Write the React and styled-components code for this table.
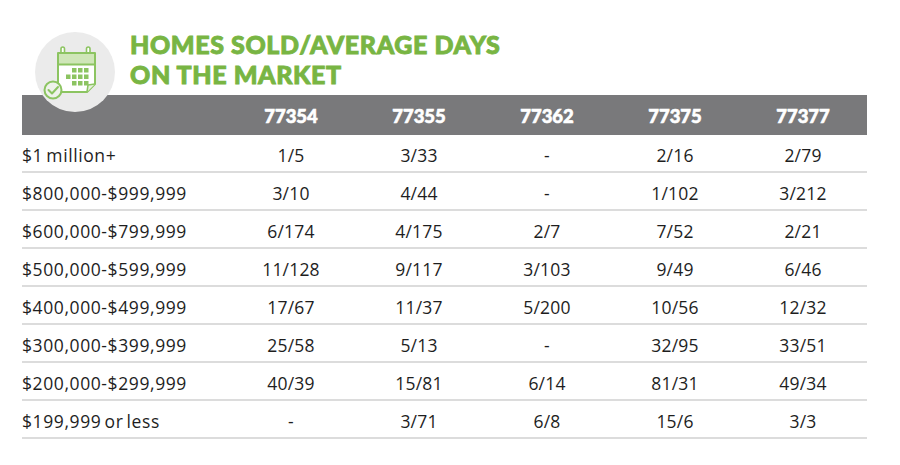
import styled, { createGlobalStyle } from "styled-components";

const GlobalStyle = createGlobalStyle`
  html, body {
    margin: 0;
    padding: 0;
    background: #fff;
  }
  body {
    width: 900px;
    height: 465px;
    overflow: hidden;
  }
`;

const zips = ["77354", "77355", "77362", "77375", "77377"];

const rows = [
  { label: "$1 million+", values: ["1/5", "3/33", "-", "2/16", "2/79"] },
  { label: "$800,000-$999,999", values: ["3/10", "4/44", "-", "1/102", "3/212"] },
  { label: "$600,000-$799,999", values: ["6/174", "4/175", "2/7", "7/52", "2/21"] },
  { label: "$500,000-$599,999", values: ["11/128", "9/117", "3/103", "9/49", "6/46"] },
  { label: "$400,000-$499,999", values: ["17/67", "11/37", "5/200", "10/56", "12/32"] },
  { label: "$300,000-$399,999", values: ["25/58", "5/13", "-", "32/95", "33/51"] },
  { label: "$200,000-$299,999", values: ["40/39", "15/81", "6/14", "81/31", "49/34"] },
  { label: "$199,999 or less", values: ["-", "3/71", "6/8", "15/6", "3/3"] },
];

const CalendarIcon = () => (
  <svg width="80" height="80" viewBox="0 0 80 80">
    <rect x="26" y="15" width="3.5" height="10" rx="1.75" fill="#fff" stroke="#8cc461" strokeWidth="1.6" />
    <rect x="51.5" y="15" width="3.5" height="10" rx="1.75" fill="#fff" stroke="#8cc461" strokeWidth="1.6" />
    <path d="M23 21 H60 V52 L52 60 H23 Z" fill="#fff" stroke="#8cc461" strokeWidth="2" strokeLinejoin="round" />
    <path d="M24 22 H59 V32 H24 Z" fill="#cfe6b8" />
    <path d="M23 32.5 H60" stroke="#8cc461" strokeWidth="1.8" />
    <path d="M60 52 L53 53 L52 60" fill="#e6f1dc" stroke="#8cc461" strokeWidth="1.6" strokeLinejoin="round" />
    {[
      [37, 36], [43, 36], [49, 36],
      [31, 42.5], [37, 42.5], [43, 42.5], [49, 42.5],
      [37, 49], [43, 49], [49, 49],
    ].map(([x, y]) => (
      <rect key={`${x}-${y}`} x={x} y={y} width="4.5" height="4.5" fill="#8cc461" />
    ))}
    <circle cx="18" cy="58" r="8.5" fill="#eef2ea" stroke="#8cc461" strokeWidth="2" />
    <path d="M13.5 58 L17 61.5 L23 55" fill="none" stroke="#8cc461" strokeWidth="2" strokeLinecap="round" strokeLinejoin="round" />
  </svg>
);

const App = () => {
  return (
    <>
      <GlobalStyle />
      <Page>
        <Heading>
          <Badge>
            <CalendarIcon />
          </Badge>
          <Title>
            <TitleLine>HOMES SOLD/AVERAGE DAYS</TitleLine>
            <TitleLine>ON THE MARKET</TitleLine>
          </Title>
        </Heading>
        <Table>
          <HeadRow>
            <HeadCell />
            {zips.map((zip) => (
              <HeadCell key={zip}>{zip}</HeadCell>
            ))}
          </HeadRow>
          {rows.map((row) => (
            <Row key={row.label}>
              <Label>{row.label}</Label>
              {row.values.map((value, i) => (
                <Cell key={i}>{value}</Cell>
              ))}
            </Row>
          ))}
        </Table>
      </Page>
    </>
  );
};
export default App;

const Page = styled.div`
  padding: 32px 0 0 22px;
  font-family: "Open Sans", "Noto Sans", sans-serif;
`;

const Heading = styled.div`
  display: flex;
  align-items: flex-start;
  margin-bottom: -17px;
  padding-left: 13px;
`;

const Badge = styled.div`
  position: relative;
  z-index: 1;
  width: 80px;
  height: 80px;
  border-radius: 50%;
  background: #ebebeb;
  flex-shrink: 0;
`;

const Title = styled.h1`
  display: flex;
  flex-direction: column;
  margin: -3px 0 0 15px;
  font-family: "Lato", sans-serif;
  font-weight: 900;
  font-size: 25px;
  line-height: 30px;
  letter-spacing: 0.6px;
  color: #78b543;
  -webkit-text-stroke: 0.9px #78b543;
`;

const TitleLine = styled.span`
  display: block;
  white-space: nowrap;
`;

const Table = styled.div`
  width: 845px;
`;

const HeadRow = styled.div`
  display: grid;
  grid-template-columns: 205px repeat(5, 128px);
  height: 40px;
  align-items: center;
  background: #79797b;
`;

const HeadCell = styled.div`
  text-align: center;
  font-family: "Lato", sans-serif;
  font-weight: 900;
  font-size: 18.5px;
  color: #fff;
  -webkit-text-stroke: 0.6px #fff;
  padding-top: 2px;
`;

const Row = styled.div`
  display: grid;
  grid-template-columns: 205px repeat(5, 128px);
  height: 38px;
  box-sizing: border-box;
  align-items: center;
  padding-top: 3px;
  border-bottom: 2px solid #dcdcdc;
  &:first-of-type {
    height: 37px;
  }
`;

const Label = styled.div`
  font-size: 17.5px;
  letter-spacing: 0.6px;
  word-spacing: -2px;
  color: #1e1e1e;
  white-space: nowrap;
`;

const Cell = styled.div`
  text-align: center;
  font-size: 17.5px;
  letter-spacing: 0.2px;
  color: #1e1e1e;
`;
